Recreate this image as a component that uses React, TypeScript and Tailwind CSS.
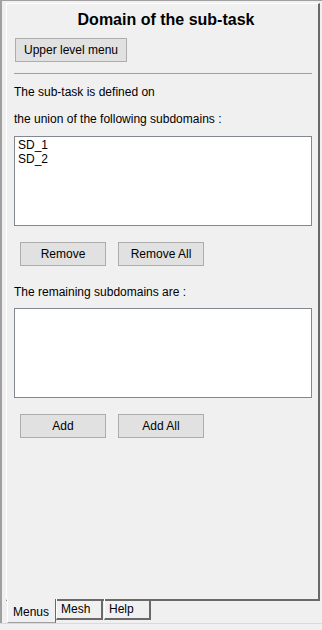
import React from "react";

const font = { fontFamily: '"Liberation Sans", Arial, sans-serif' };

function Btn({ label, className = "" }: { label: string; className?: string }) {
  return (
    <button
      className={`h-[24px] border border-[#adadad] bg-[#e1e1e1] text-[12px] text-black leading-none ${className}`}
    >
      {label}
    </button>
  );
}

function ListBox({ items }: { items: string[] }) {
  return (
    <div className="h-[90px] w-[298px] border border-[#828790] bg-white pl-[3px] pt-[1px]">
      {items.map((it) => (
        <div key={it} className="text-[12px] leading-[14px] text-black">
          {it}
        </div>
      ))}
    </div>
  );
}

export default function App() {
  return (
    <div className="flex h-[630px] w-[322px] flex-col bg-[#f0f0f0]" style={font}>
      <div className="h-px w-full bg-[#a0a0a0]" />
      <div className="flex flex-1 flex-col border-l-2 border-[#a0a0a0] pl-[4px] pt-[2px]">
        {/* Tab panel */}
        <div className="flex h-[598px] w-[314px] flex-col border-l border-t border-white border-r-2 border-b-2 border-r-[#696969] border-b-[#696969] pl-[7px]">
          <h1 className="mt-[6px] text-center text-[16px] font-bold leading-[20px] text-black">
            Domain of the sub-task
          </h1>
          <div className="mt-[7px]">
            <Btn label="Upper level menu" className="ml-px w-[112px]" />
          </div>
          <div className="mt-[11px] h-px w-[298px] bg-[#a0a0a0]" />
          <p className="mt-[11px] text-[12px] leading-[14px] text-black">The sub-task is defined on</p>
          <p className="mt-[13px] text-[12px] leading-[14px] text-black">
            the union of the following subdomains :
          </p>
          <div className="mt-[10px]">
            <ListBox items={["SD_1", "SD_2"]} />
          </div>
          <div className="mt-[16px] ml-[6px] flex gap-[12px]">
            <Btn label="Remove" className="w-[86px]" />
            <Btn label="Remove All" className="w-[86px]" />
          </div>
          <p className="mt-[19px] text-[12px] leading-[14px] text-black">The remaining subdomains are :</p>
          <div className="mt-[9px]">
            <ListBox items={[]} />
          </div>
          <div className="mt-[16px] ml-[6px] flex gap-[12px]">
            <Btn label="Add" className="w-[86px]" />
            <Btn label="Add All" className="w-[86px]" />
          </div>
        </div>
        {/* Tabs */}
        <div className="relative -mt-[2px] flex pl-px">
          <div className="flex h-[24px] w-[49px] items-center border-l border-white border-r border-r-[#696969] border-b border-b-[#a0a0a0] bg-[#f0f0f0] pl-[5px] pt-[2px] text-[12px] text-black">
            Menus
          </div>
          <div className="flex h-[21px] w-[47px] items-center border-l border-white border-r-2 border-b-2 border-r-[#696969] border-b-[#696969] pl-[4px] text-[12px] text-black">
            Mesh
          </div>
          <div className="ml-px flex h-[21px] w-[47px] items-center border-l border-white border-r-2 border-b-2 border-r-[#696969] border-b-[#696969] pl-[4px] text-[12px] text-black">
            Help
          </div>
        </div>
      </div>
      <div className="h-[7px] w-full border-t border-[#dadada]" />
    </div>
  );
}
